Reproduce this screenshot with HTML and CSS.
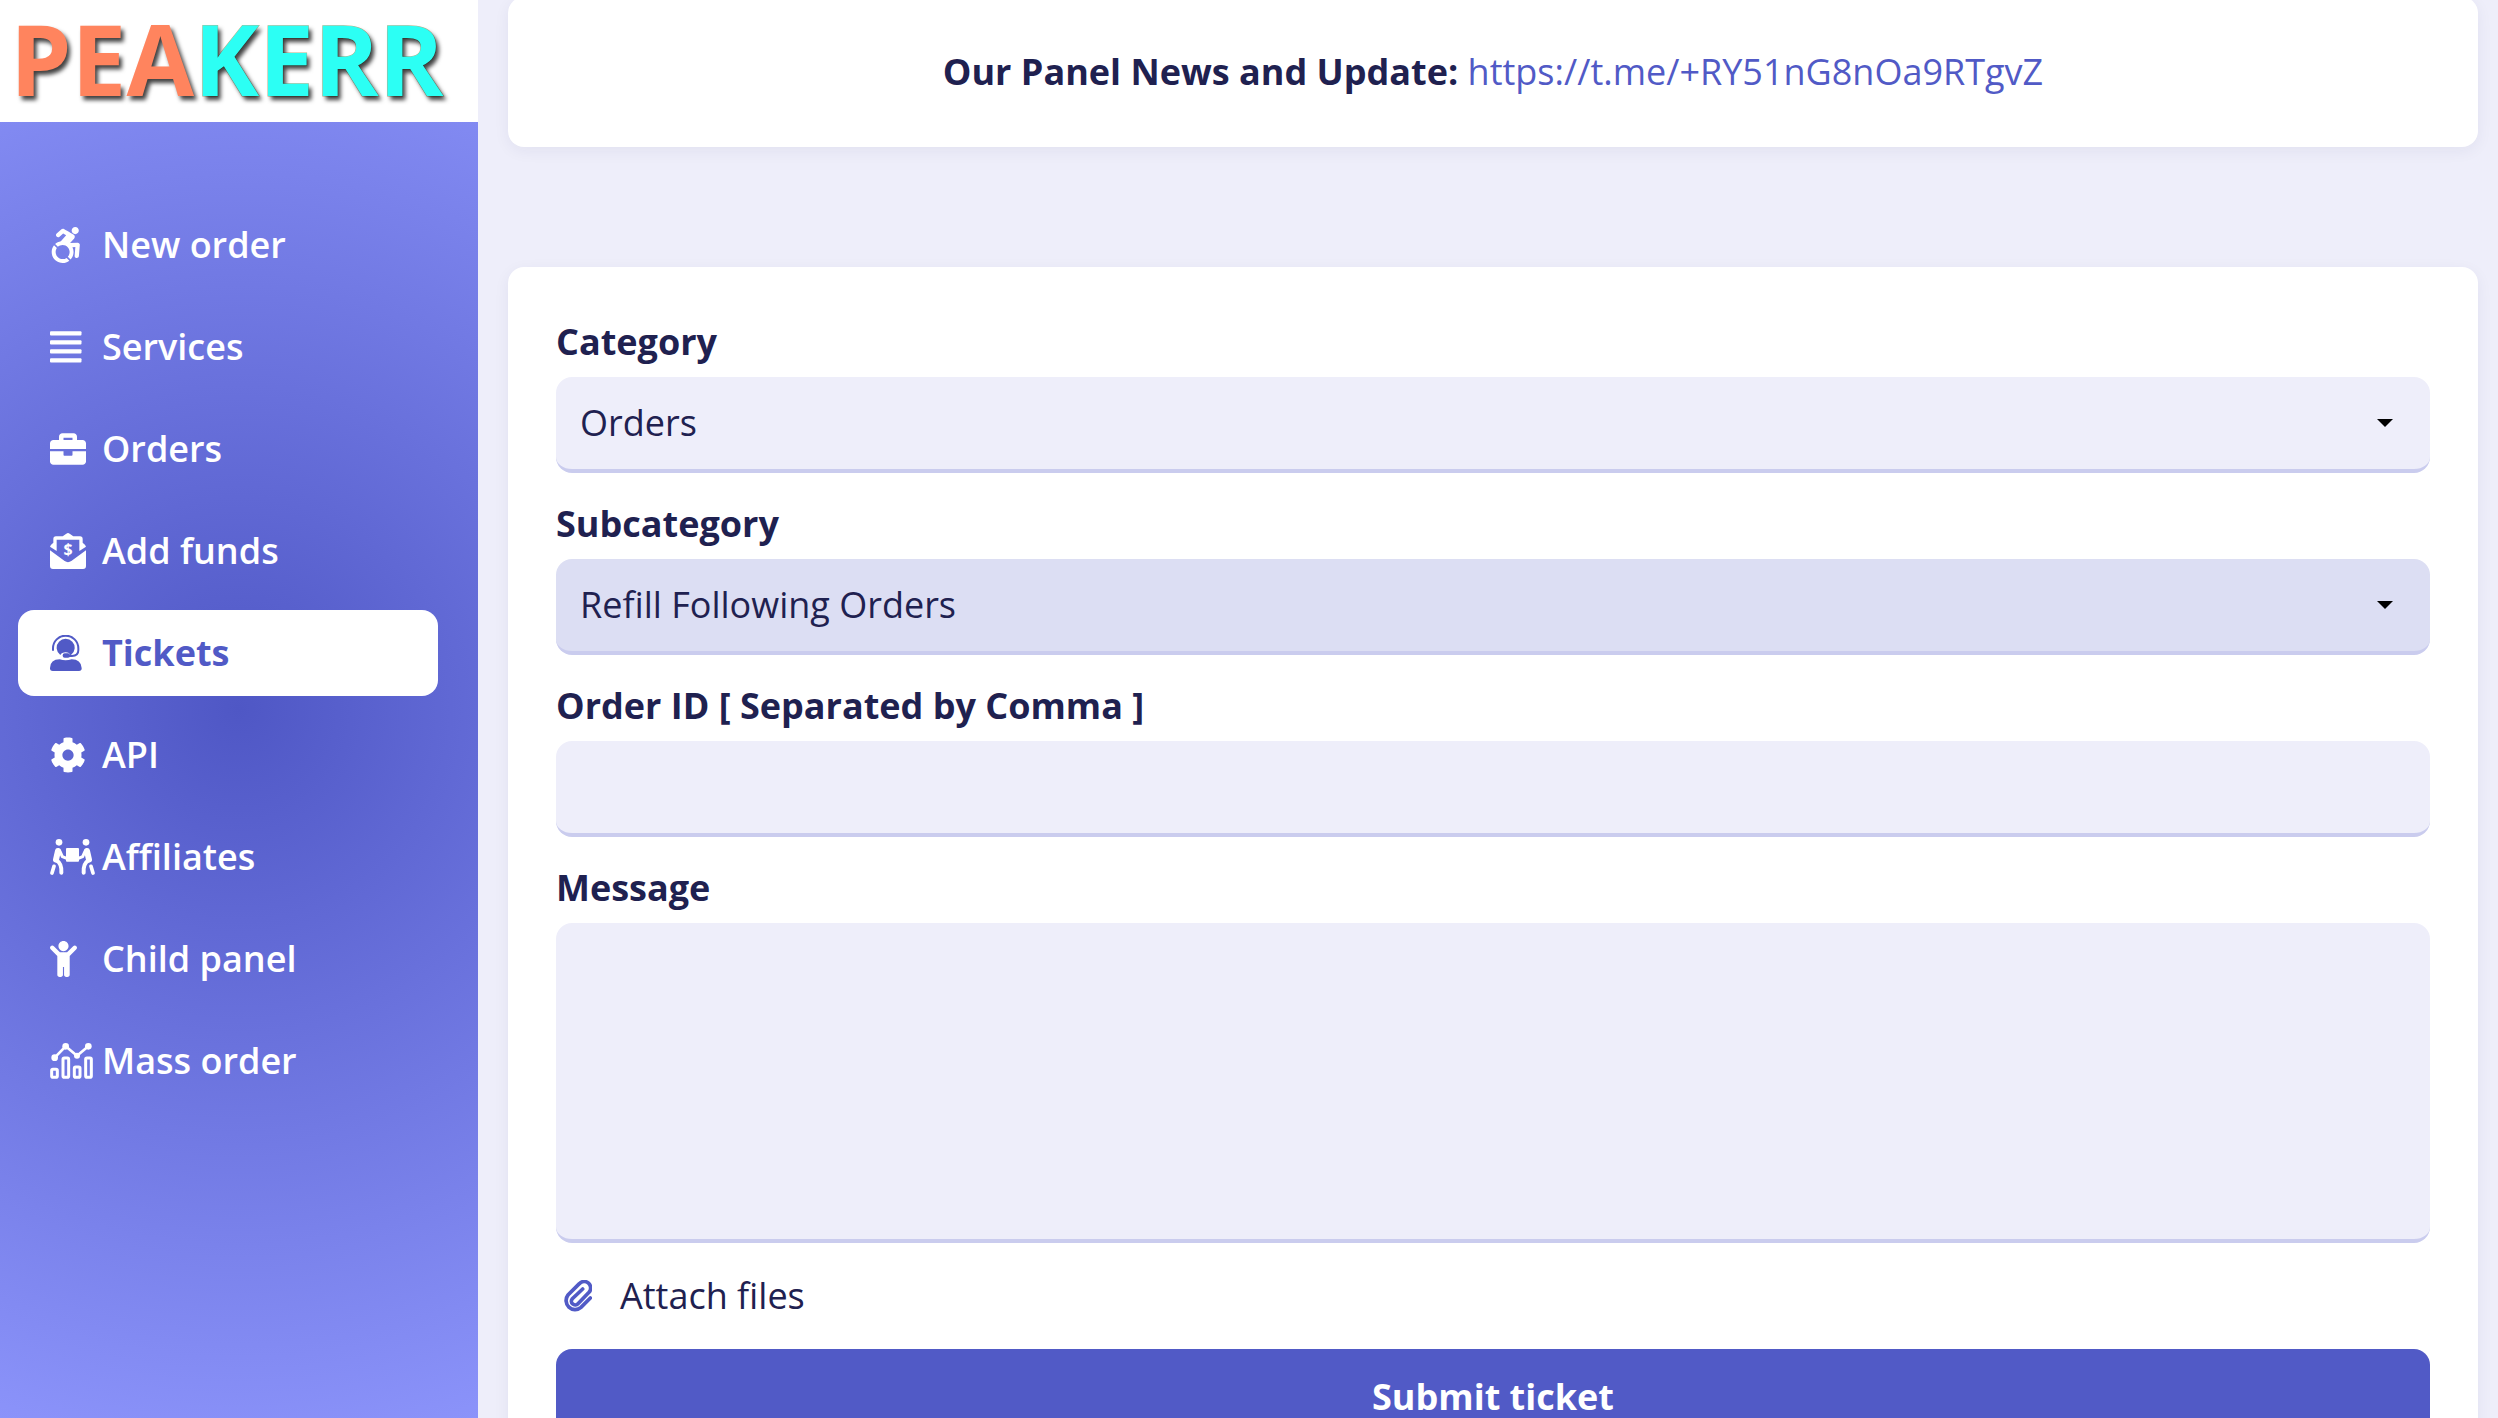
FILE: index.html
```html
<!DOCTYPE html>
<html lang="en">
<head>
  <meta charset="UTF-8">
  <meta name="viewport" content="width=device-width, initial-scale=1.0">
  <title>Tickets - Peakerr</title>
  <link rel="stylesheet" href="styles.css">
</head>
<body>
  <div class="layout">
    <aside class="sidebar">
      <a href="#" class="logo"><span class="logo-peak">PEA</span><span class="logo-err">KERR</span></a>

      <nav class="menu">
        <a href="#" class="menu-link">
          <span class="menu-icon"><svg viewBox="0 0 448 512"><path d="M423.9 255.8L411 413.1c-3.3 40.7-63.9 35.1-60.6-4.9l10-122.5-41.1 2.3c10.1 20.7 15.8 43.9 15.8 68.5 0 41.2-16.1 78.7-42.3 106.5l-39.3-39.3c57.9-63.7 13.1-167.2-74-167.2-25.9 0-49.5 9.9-67.2 26L73 243.2c22-20.7 50.1-35.1 81.4-40.2l75.3-85.7-42.6-24.8-51.6 46c-30 26.8-70.6-18.5-40.5-45.4l68-60.7c9.8-8.8 24.1-10.2 35.5-3.6 0 0 139.3 80.9 139.5 81.1 16.2 10.1 20.7 36 6.1 52.6L285.7 229l106.1-5.9c18.5-1.1 33.6 14.4 32.1 32.7zm-64.9-154c28.1 0 50.9-22.8 50.9-50.9C409.9 22.8 387.1 0 359 0c-28.1 0-50.9 22.8-50.9 50.9 0 28.1 22.8 50.9 50.9 50.9zM179.6 456.5c-80.6 0-127.4-90.6-82.7-156.1l-39.7-39.7C36.4 287 24 320.3 24 356.4c0 130.7 150.7 201.4 251.4 122.5l-39.7-39.7c-16 10.9-35.3 17.3-56.1 17.3z"/></svg></span>
          New order
        </a>
        <a href="#" class="menu-link">
          <span class="menu-icon"><svg viewBox="0 0 448 512"><rect x="0" y="32" width="448" height="60" rx="14"/><rect x="0" y="160" width="448" height="60" rx="14"/><rect x="0" y="288" width="448" height="60" rx="14"/><rect x="0" y="416" width="448" height="60" rx="14"/></svg></span>
          Services
        </a>
        <a href="#" class="menu-link">
          <span class="menu-icon"><svg viewBox="0 0 512 512"><path d="M320 336c0 8.84-7.16 16-16 16h-96c-8.84 0-16-7.16-16-16v-48H0v144c0 25.6 22.4 48 48 48h416c25.6 0 48-22.4 48-48V288H320v48zm144-208h-80V80c0-25.6-22.4-48-48-48H176c-25.6 0-48 22.4-48 48v48H48c-25.6 0-48 22.4-48 48v80h512v-80c0-25.6-22.4-48-48-48zm-144 0H192V96h128v32z"/></svg></span>
          Orders
        </a>
        <a href="#" class="menu-link">
          <span class="menu-icon"><svg viewBox="0 0 108 108"><path d="M0 52L44 84Q54 91 64 84L108 52V99Q108 108 99 108H9Q0 108 0 99Z"/><path d="M20 54V20H88V54L108 41Q107 36 98 29V18Q98 10 90 10H70L59 2Q54-2 49 2L38 10H18Q10 10 10 18V29Q1 36 0 41Z"/><text class="dollar" x="54" y="66" text-anchor="middle">$</text></svg></span>
          Add funds
        </a>
        <a href="#" class="menu-link active">
          <span class="menu-icon"><svg viewBox="0 0 95 108"><path d="M0 99Q1 73 29 73Q47 79 65 73Q93 73 95 99Q96 108 87 108H8Q-1 108 0 99Z"/><path d="M31 60A27 27 0 1 1 63 60Q60 62 57 54Q47 50 37 54Q33 56 31 60Z"/><path d="M9 47V40A38 38 0 0 1 85 40V46Q85 63 66 63H47" fill="none" stroke="currentColor" stroke-width="6"/><rect x="38" y="55" width="22" height="13" rx="6"/></svg></span>
          Tickets
        </a>
        <a href="#" class="menu-link">
          <span class="menu-icon"><svg viewBox="0 0 512 512"><path d="M487.4 315.7l-42.6-24.6c4.3-23.2 4.3-47 0-70.2l42.6-24.6c4.9-2.8 7.1-8.6 5.5-14-11.1-35.6-30-67.8-54.7-94.6-3.8-4.1-10-5.1-14.8-2.3L380.8 110c-17.9-15.4-38.5-27.3-60.8-35.1V25.8c0-5.6-3.9-10.5-9.4-11.7-36.7-8.2-74.3-7.8-109.2 0-5.5 1.2-9.4 6.1-9.4 11.7V75c-22.2 7.9-42.8 19.8-60.8 35.1L88.7 85.5c-4.9-2.8-11-1.9-14.8 2.3-24.7 26.7-43.6 58.9-54.7 94.6-1.7 5.4.6 11.2 5.5 14L67.3 221c-4.3 23.2-4.3 47 0 70.2l-42.6 24.6c-4.9 2.8-7.1 8.6-5.5 14 11.1 35.6 30 67.8 54.7 94.6 3.8 4.1 10 5.1 14.8 2.3l42.6-24.6c17.9 15.4 38.5 27.3 60.8 35.1v49.2c0 5.6 3.9 10.5 9.4 11.7 36.7 8.2 74.3 7.8 109.2 0 5.5-1.2 9.4-6.1 9.4-11.7v-49.2c22.2-7.9 42.8-19.8 60.8-35.1l42.6 24.6c4.9 2.8 11 1.9 14.8-2.3 24.7-26.7 43.6-58.9 54.7-94.6 1.5-5.5-.7-11.3-5.6-14.1zM256 336c-44.1 0-80-35.9-80-80s35.9-80 80-80 80 35.9 80 80-35.9 80-80 80z"/></svg></span>
          API
        </a>
        <a href="#" class="menu-link">
          <span class="menu-icon"><svg viewBox="0 0 135 108"><circle cx="27" cy="10" r="10"/><circle cx="108" cy="10" r="10"/><rect x="48" y="27" width="39" height="41" rx="3"/><g id="carrier" fill="none" stroke="currentColor" stroke-linecap="round" stroke-linejoin="round"><path d="M30 37L37 53L52 59" stroke-width="9"/><path d="M24 36L18 62" stroke-width="18"/><path d="M20 64Q36 74 34 101" stroke-width="12"/><path d="M12 82L6 102" stroke-width="11"/></g><use href="#carrier" transform="matrix(-1 0 0 1 135 0)"/></svg></span>
          Affiliates
        </a>
        <a href="#" class="menu-link">
          <span class="menu-icon"><svg viewBox="0 0 384 512"><path d="M120 72c0-39.765 32.235-72 72-72s72 32.235 72 72c0 39.764-32.235 72-72 72s-72-32.236-72-72zm254.627 1.373c-12.496-12.497-32.758-12.497-45.254 0L242.745 160H141.254L54.627 73.373c-12.496-12.497-32.758-12.497-45.254 0-12.497 12.497-12.497 32.758 0 45.255L104 213.254V480c0 17.673 14.327 32 32 32h16c17.673 0 32-14.327 32-32V368h16v112c0 17.673 14.327 32 32 32h16c17.673 0 32-14.327 32-32V213.254l94.627-94.627c12.497-12.497 12.497-32.757 0-45.254z"/></svg></span>
          Child panel
        </a>
        <a href="#" class="menu-link">
          <span class="menu-icon"><svg viewBox="0 0 129 108"><g fill="none" stroke="currentColor" stroke-width="9"><rect x="5" y="79" width="17" height="24" rx="4"/><rect x="39" y="45" width="17" height="58" rx="4"/><rect x="73" y="72" width="17" height="31" rx="4"/><rect x="107" y="45" width="17" height="58" rx="4"/><path d="M14 44L47 10L81 38L115 10" stroke-width="8"/></g><circle cx="14" cy="44" r="10"/><circle cx="47" cy="10" r="10"/><circle cx="81" cy="38" r="9"/><circle cx="115" cy="10" r="10"/></svg></span>
          Mass order
        </a>
      </nav>
    </aside>

    <main class="content">
      <div class="card news">
        <strong>Our Panel News and Update:</strong> <a href="https://t.me/+RY51nG8nOa9RTgvZ">https://t.me/+RY51nG8nOa9RTgvZ</a>
      </div>

      <form class="card ticket-form">
        <div class="form-group">
          <label for="category">Category</label>
          <div class="select-wrap">
            <select id="category" class="form-control">
              <option>Orders</option>
            </select>
          </div>
        </div>
        <div class="form-group">
          <label for="subcategory">Subcategory</label>
          <div class="select-wrap">
            <select id="subcategory" class="form-control focused">
              <option>Refill Following Orders</option>
            </select>
          </div>
        </div>
        <div class="form-group">
          <label for="orderid">Order ID [ Separated by Comma ]</label>
          <input type="text" id="orderid" class="form-control">
        </div>
        <div class="form-group">
          <label for="message">Message</label>
          <textarea id="message" class="form-control"></textarea>
        </div>
        <button type="button" class="attach">
          <svg viewBox="0 0 84 96"><path d="M79 54L51 82A27 27 0 0 1 12 45L46 11A19 19 0 0 1 75 37L42 71A11 11 0 0 1 25 56L56 27" fill="none" stroke="currentColor" stroke-width="11" stroke-linecap="round"/></svg>
          Attach files
        </button>
        <button type="submit" class="btn-submit">Submit ticket</button>
      </form>
    </main>
  </div>
</body>
</html>
```
FILE: styles.css
```css
* {
  box-sizing: border-box;
}
body {
  margin: 0;
  font-family: 'Open Sans', sans-serif;
  font-size: 36px;
  line-height: 54px;
  color: #1f2150;
  background: #eeeefa;
}
.layout {
  display: flex;
  height: 100vh;
  overflow: hidden;
}
svg {
  display: block;
  fill: currentColor;
}

/* sidebar */
.sidebar {
  flex: 0 0 478px;
  background: radial-gradient(circle, #4f57c5, #8b93fa);
}
.logo {
  display: flex;
  align-items: center;
  height: 122px;
  padding: 0 0 6px 10px;
  background: #fff;
  font-size: 98px;
  font-weight: 700;
  line-height: 116px;
  text-decoration: none;
  text-shadow: 3px 4px 4px rgba(0,0,0,0.75);
}
.logo-peak {
  color: #ff845e;
}
.logo-err {
  color: #2cfff4;
  -webkit-text-stroke: 1px #b9b58e;
  paint-order: stroke fill;
}
.menu {
  display: flex;
  flex-direction: column;
  gap: 16px;
  padding: 80px 40px 0 18px;
}
.menu-link {
  display: flex;
  align-items: center;
  padding: 16px 32px;
  border-radius: 16px;
  color: #fff;
  font-weight: 600;
  text-decoration: none;
}
.menu-link.active {
  background: #fff;
  color: #515ac6;
  font-weight: 700;
}
.menu-icon {
  flex: 0 0 52px;
}
.menu-icon svg {
  height: 36px;
}
.dollar {
  font-size: 48px;
  font-weight: 700;
}

/* content */
.content {
  flex: 1;
  margin-top: -3px;
  padding: 0 20px 0 30px;
}
.card {
  padding: 48px;
  border-radius: 16px;
  background: #fff;
  box-shadow: 0 4px 16px rgba(31,33,80,0.06);
}
.news {
  margin-bottom: 120px;
  text-align: center;
}
.news a {
  color: #515ac6;
  text-decoration: none;
}
.form-group {
  margin-bottom: 24px;
}
.form-group label {
  display: block;
  margin-bottom: 8px;
  font-weight: 700;
}
.form-control {
  display: block;
  width: 100%;
  height: 96px;
  padding: 0 24px;
  border: none;
  border-bottom: 4px solid #caccee;
  border-radius: 16px;
  outline: none;
  background: #eeeefa;
  color: #1f2150;
  font: inherit;
  appearance: none;
}
.form-control.focused {
  background: #dcdef3;
}
textarea.form-control {
  height: 320px;
  padding: 20px 24px;
  resize: none;
}
.select-wrap {
  position: relative;
}
.select-wrap::after {
  content: '';
  position: absolute;
  top: 42px;
  right: 37px;
  border: 8px solid transparent;
  border-top-color: #000;
  border-bottom: 0;
  pointer-events: none;
}
.attach {
  display: flex;
  align-items: center;
  gap: 28px;
  height: 58px;
  margin-bottom: 24px;
  padding: 0 8px;
  border: none;
  background: none;
  color: #1f2150;
  font: inherit;
}
.attach svg {
  height: 32px;
  color: #515ac6;
}
.btn-submit {
  width: 100%;
  height: 96px;
  border: none;
  border-radius: 16px;
  background: #515ac6;
  color: #fff;
  font: inherit;
  font-weight: 700;
}
```
